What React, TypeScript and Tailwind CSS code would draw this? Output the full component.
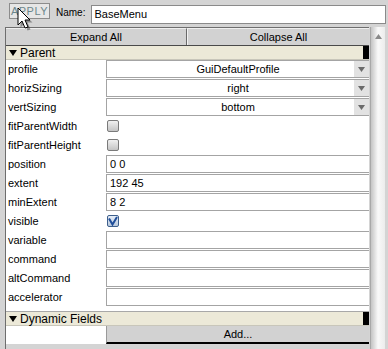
import React from 'react';

type Row = {
  label: string;
  kind: 'text' | 'select' | 'check';
  value?: string;
  checked?: boolean;
};

const rows: Row[] = [
  { label: 'profile', kind: 'select', value: 'GuiDefaultProfile' },
  { label: 'horizSizing', kind: 'select', value: 'right' },
  { label: 'vertSizing', kind: 'select', value: 'bottom' },
  { label: 'fitParentWidth', kind: 'check', checked: false },
  { label: 'fitParentHeight', kind: 'check', checked: false },
  { label: 'position', kind: 'text', value: '0 0' },
  { label: 'extent', kind: 'text', value: '192 45' },
  { label: 'minExtent', kind: 'text', value: '8 2' },
  { label: 'visible', kind: 'check', checked: true },
  { label: 'variable', kind: 'text', value: '' },
  { label: 'command', kind: 'text', value: '' },
  { label: 'altCommand', kind: 'text', value: '' },
  { label: 'accelerator', kind: 'text', value: '' },
];

const Cursor = () => (
  <svg className="absolute left-[17px] top-[7px]" width="16" height="24" viewBox="0 0 16 24">
    <path d="M2 2 L2 19 L6 15 L9 22 L12 21 L9 14 L14 14 Z" fill="#000" opacity="0.35" transform="translate(1.5 1.5)" />
    <path d="M1 1 L1 18 L5 14 L8 21 L11 20 L8 13 L13 13 Z" fill="#fff" stroke="#000" strokeWidth="1" strokeLinejoin="round" />
  </svg>
);

const CheckBox = ({ checked }: { checked?: boolean }) => (
  <div
    className={`w-[12px] h-[12px] rounded-[2px] border flex items-center justify-center ${
      checked ? 'border-[#3d5f8c] bg-gradient-to-b from-[#e6eef8] to-[#b8c8dc]' : 'border-[#7a7a7a] bg-gradient-to-b from-[#f0f0f0] to-[#c4c4c4]'
    }`}
  >
    {checked && (
      <svg width="10" height="10" viewBox="0 0 10 10">
        <path d="M1 2.5 L4.5 8.5 L9 1" fill="none" stroke="#1f4e9a" strokeWidth="2" />
      </svg>
    )}
  </div>
);

const SectionHeader = ({ title }: { title: string }) => (
  <div className="h-[14px] flex items-center bg-[#ece9d8] border-b border-[#c8c6ba] text-[12px]">
    <svg className="ml-[3px] mr-[3px]" width="8" height="6" viewBox="0 0 8 6">
      <path d="M0 0 L8 0 L4 6 Z" fill="#000" />
    </svg>
    <span className="leading-none">{title}</span>
    <div className="ml-auto w-[6px] h-full bg-black" />
  </div>
);

export default function App() {
  return (
    <div
      className="w-[388px] h-[349px] overflow-hidden bg-[#d4d4d4] text-[11px] text-black flex flex-col relative"
      style={{ fontFamily: '"Liberation Sans", Arial, sans-serif' }}
    >
      {/* Top bar */}
      <div className="h-[27px] flex items-start pt-[3px] pl-[9px] pr-[2px]">
        <div className="w-[41px] h-[16px] bg-[#e6e6e6] border border-[#8c8c8c] flex items-center justify-center text-[#6d878c] tracking-[0.5px] leading-none">
          APPLY
        </div>
        <span className="ml-[6px] mt-[5px] text-[10px] leading-none">Name:</span>
        <div className="ml-[6px] mt-[2px] flex-1 h-[19px] bg-white border border-[#8a8a8a] flex items-center pl-[2px]">
          BaseMenu
        </div>
      </div>
      <Cursor />

      {/* Body */}
      <div className="flex flex-1 min-h-0">
        <div className="ml-[5px] w-[364px] border-l border-t border-[#6e6e6e] flex flex-col">
          {/* Expand / Collapse */}
          <div className="h-[18px] flex border-b border-[#4a4a4a]">
            <div className="w-[181px] bg-[#d2d2d2] border-t border-[#efefef] border-r border-r-[#6a6a6a] flex items-center justify-center">
              Expand All
            </div>
            <div className="flex-1 bg-[#d2d2d2] border-t border-[#efefef] border-l border-l-[#f2f2f2] flex items-center justify-center">
              Collapse All
            </div>
          </div>

          <div className="bg-white flex flex-col">
            <SectionHeader title="Parent" />
            {rows.map((r) => (
              <div key={r.label} className="h-[19px] flex">
                <div className="w-[100px] pl-[2px] flex items-center">{r.label}</div>
                <div className="flex-1">
                  {r.kind === 'check' ? (
                    <div className="h-[18px] flex items-center pl-[1px]">
                      <CheckBox checked={r.checked} />
                    </div>
                  ) : (
                    <div className="h-[18px] border-l border-t border-b border-[#a4a4a4] flex items-center relative">
                      {r.kind === 'select' ? (
                        <>
                          <span className="absolute inset-0 flex items-center justify-center">{r.value}</span>
                          <div className="ml-auto w-[15px] h-full bg-[#e2e2e2] flex items-center justify-center relative">
                            <svg width="7" height="5" viewBox="0 0 7 5">
                              <path d="M0 0 L7 0 L3.5 5 Z" fill="#6a6a6a" />
                            </svg>
                          </div>
                        </>
                      ) : (
                        <span className="pl-[3px]">{r.value}</span>
                      )}
                    </div>
                  )}
                </div>
              </div>
            ))}
            <div className="h-[5px] border-b border-[#a8a8a8]" />
            <SectionHeader title="Dynamic Fields" />
            <div className="h-[18px] flex">
              <div className="w-[100px] bg-white" />
              <div className="flex-1 bg-[#d2d2d2] border-l border-[#9a9a9a] border-b-2 border-b-black flex items-center justify-center">
                Add...
              </div>
            </div>
          </div>
        </div>

        {/* Scrollbar */}
        <div className="ml-[1px] w-[15px] bg-gradient-to-r from-[#c4c4c4] via-[#f9f9f9] to-[#ececec] border-l border-[#a8a8a8] flex flex-col items-center pt-[7px]">
          <svg width="7" height="5" viewBox="0 0 7 5">
            <path d="M0 5 L7 5 L3.5 0 Z" fill="#8a8a8a" />
          </svg>
        </div>
      </div>
    </div>
  );
}
